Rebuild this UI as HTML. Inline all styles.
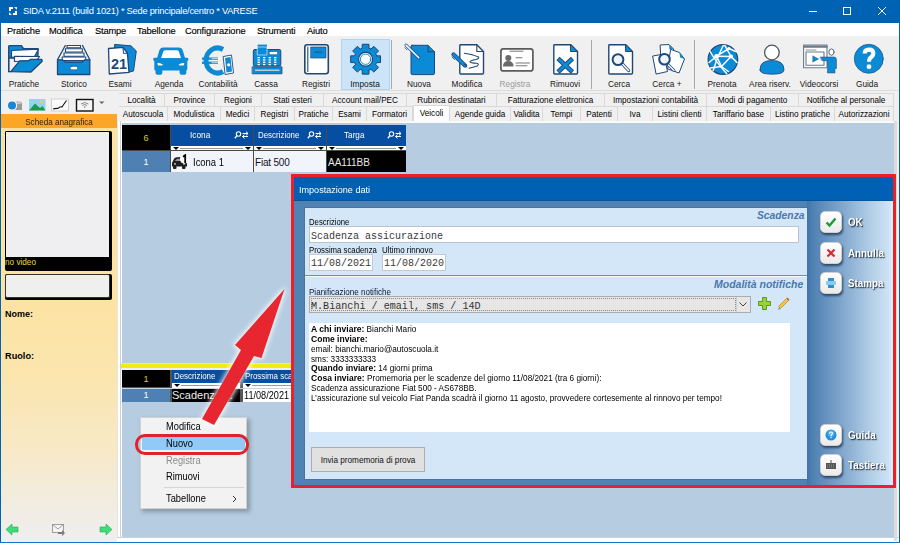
<!DOCTYPE html>
<html><head><meta charset="utf-8">
<style>
*{margin:0;padding:0;box-sizing:border-box}
html,body{width:900px;height:543px;overflow:hidden;background:#f0f0f0;font-family:"Liberation Sans",sans-serif;color:#000}
.a{position:absolute}
.t{position:absolute;white-space:nowrap;line-height:1}
/* title */
#title{left:0;top:0;width:900px;height:23px;background:#0062b2}
#menu{left:1px;top:23px;width:898px;height:13px;background:#fff}
#menu span{position:absolute;top:4px;font-size:9.3px;letter-spacing:-0.15px;color:#000;line-height:1;-webkit-text-stroke:0.15px #000}
#tb{left:1px;top:36px;width:898px;height:54px;background:#f0f0f0}
.lbl{position:absolute;top:80px;font-size:8.3px;color:#161616;line-height:1;text-align:center;width:60px;margin-left:-30px}
/* tabs */
.tab{position:absolute;height:13px;border-right:1px solid #d9d9d9;border-top:1px solid #d9d9d9;background:#f0f0f0;font-size:8.2px;line-height:13px;text-align:center;color:#000}
/* grid */
.nl{position:absolute;left:311px;font-size:9px;line-height:9px;color:#000;white-space:nowrap;transform:scaleX(0.911);transform-origin:0 0}
.nl b{font-size:9.4px}
.hdr{position:absolute;background:#0a4e9f;color:#fff;font-size:8px;line-height:1}
</style></head><body>
<!-- window borders -->
<div class="a" style="left:0;top:0;width:1px;height:543px;background:#0062b2"></div>
<div class="a" style="left:899px;top:0;width:1px;height:543px;background:#0062b2"></div>
<div class="a" style="left:0;top:542px;width:900px;height:1px;background:#1a72c0"></div>

<div id="title" class="a">
  <div class="t" style="left:23px;top:7px;font-size:9.3px;letter-spacing:-0.24px;color:#fff">SIDA v.2111 (build 1021) * Sede principale/centro * VARESE</div>
</div>

<svg class="a" style="left:8px;top:6px" width="10" height="10" viewBox="0 0 10 10"><path d="M1 1 H5 V3 H3 V5 H1 Z" fill="#fff"/><path d="M9 9 H5 V7 H7 V5 H9 Z" fill="#fff"/><path d="M6 1 H9 V4 Z" fill="#dfefff"/><path d="M1 6 V9 H4 Z" fill="#dfefff"/></svg>
<div class="a" style="left:809px;top:11px;width:8px;height:1px;background:#fff"></div>
<div class="a" style="left:843px;top:7px;width:8px;height:8px;border:1px solid #fff"></div>
<svg class="a" style="left:878px;top:7px" width="8" height="8" viewBox="0 0 8 8"><path d="M0 0 L8 8 M8 0 L0 8" stroke="#fff" stroke-width="1"/></svg>

<div id="menu" class="a">
  <span style="left:6px">Pratiche</span>
  <span style="left:48px">Modifica</span>
  <span style="left:94px">Stampe</span>
  <span style="left:136px">Tabellone</span>
  <span style="left:184px">Configurazione</span>
  <span style="left:256px">Strumenti</span>
  <span style="left:306px">Aiuto</span>
</div>
<div id="tb" class="a"></div>
<div class="a" style="left:341px;top:39px;width:49px;height:51px;background:#cce4f7;border:1px solid #a9d6fb"></div>
<div class="a" style="left:391px;top:40px;width:1px;height:49px;background:#a8a8a8"></div>
<div class="a" style="left:591px;top:40px;width:1px;height:49px;background:#a8a8a8"></div>
<div class="a" style="left:694px;top:40px;width:1px;height:49px;background:#a8a8a8"></div>

<svg class="a" style="left:0;top:0" width="900" height="90" viewBox="0 0 900 90">
<g stroke-linejoin="round" stroke-linecap="round">
<!-- Pratiche folder origin 8,45 -->
<g transform="translate(8 45)">
 <path d="M0.7 26.5 V1.2 Q0.7 0.7 1.5 0.7 H13.5 L15.5 3.7 H30 V13 H0.7" fill="#0b8ad6" stroke="#1f4777" stroke-width="1.3"/>
 <path d="M3.5 5.5 L30.5 4.2 L26.5 11.5 L3.5 12.3 Z" fill="#fff" stroke="#1f4777" stroke-width="1.2"/>
 <path d="M6.5 11.3 L31.5 11.5 L28.5 15.5 L6.5 16.5 Z" fill="#fff" stroke="#1f4777" stroke-width="1.2"/>
 <path d="M2.8 26.7 L11.7 15.8 L20.5 15.8 L22.7 14.4 L33.8 14.4 L34.2 16.3 L23 27 Z" fill="#0b8ad6" stroke="#1f4777" stroke-width="1.3"/>
 <path d="M0.7 12 V26.7 H3" fill="none" stroke="#1f4777" stroke-width="1.3"/>
</g>
<!-- Storico drawer origin 57,45 -->
<g transform="translate(57 45)">
 <path d="M0.5 14.8 L8.3 0.5 M32.8 14.8 L25.5 0.5" stroke="#1f4777" stroke-width="1.3" fill="none"/>
 <rect x="10" y="0.5" width="13.5" height="2.3" fill="#fff" stroke="#1f4777" stroke-width="1.1"/>
 <rect x="8.5" y="3.8" width="16.8" height="3.2" fill="#fff" stroke="#1f4777" stroke-width="1.1"/>
 <rect x="7" y="8" width="20" height="3.3" fill="#fff" stroke="#1f4777" stroke-width="1.1"/>
 <rect x="5.2" y="12" width="23.5" height="3.5" fill="#fff" stroke="#1f4777" stroke-width="1.1"/>
 <path d="M0.5 14.8 H5.5 L8.3 17 H25 L27.8 14.8 H32.8 V29.5 H0.5 Z" fill="#0b8ad6" stroke="#1f4777" stroke-width="1.3"/>
 <rect x="13.3" y="21.4" width="7.2" height="3.4" rx="1.2" fill="#fff" stroke="#1f4777" stroke-width=".6"/>
</g>
<!-- Esami origin 108,44 -->
<g transform="translate(108 44)">
 <path d="M7 0.5 L23 1.8 L28.3 7 L25.5 27 L19.5 28.5 L19 9 L15 3.5 L7 4 Z" fill="#0b8ad6" stroke="#1f4777" stroke-width="1"/>
 <path d="M0.5 4.5 L15 3.4 L19.4 9.2 L21 28.3 L1.3 30 Z" fill="#fff" stroke="#1f4777" stroke-width="1.3"/>
 <path d="M15 3.4 L15.5 9.4 L19.4 9.2" fill="none" stroke="#1f4777" stroke-width="1"/>
 <text x="11" y="25" font-family="Liberation Sans" font-weight="bold" font-size="14.5" fill="#1f4777" text-anchor="middle">21</text>
</g>
<!-- Agenda car origin 153.3,47.4 -->
<g transform="translate(153.3 47.4)">
 <path d="M10 0 H25.5 Q28.5 0 29.5 3 L32 11.5 H3.5 L6 3 Q7 0 10 0 Z" fill="#0b8ad6"/>
 <path d="M12 2.8 H23.5 Q25 2.8 25.5 4 L27.8 10.8 H7.7 L10 4 Q10.5 2.8 12 2.8 Z" fill="#fff"/>
 <rect x="0" y="10.3" width="5.5" height="3.2" rx="1.2" fill="#0b8ad6"/>
 <rect x="29.5" y="10.3" width="5.5" height="3.2" rx="1.2" fill="#0b8ad6"/>
 <path d="M3 10.8 H32 Q34 10.8 34 13 V21.5 Q34 23 32.5 23 H2.5 Q1 23 1 21.5 V13 Q1 10.8 3 10.8 Z" fill="#0b8ad6"/>
 <path d="M4 15.8 Q7 15.3 10 17.5 Q7 18.6 4.5 17.8 Z" fill="#fff"/>
 <path d="M31 15.8 Q28 15.3 25 17.5 Q28 18.6 30.5 17.8 Z" fill="#fff"/>
 <path d="M2.2 21.5 H9 V25.5 Q9 27.3 7.2 27.3 H4 Q2.2 27.3 2.2 25.5 Z" fill="#0b8ad6"/>
 <path d="M26.3 21.5 H33 V25.5 Q33 27.3 31.2 27.3 H28 Q26.3 27.3 26.3 25.5 Z" fill="#0b8ad6"/>
</g>
<!-- Contabilita origin 202,46 -->
<g transform="translate(202 46)">
 <path d="M21 3.5 A11.5 12.5 0 1 0 21 25.5" fill="none" stroke="#0b8ad6" stroke-width="5" stroke-linecap="butt"/>
 <rect x="0" y="11.5" width="16" height="2.3" fill="#0b8ad6"/>
 <rect x="0" y="15.6" width="16" height="2.3" fill="#0b8ad6"/>
 <path d="M10 12.6 H20 M10 16.7 H19" stroke="#fff" stroke-width=".7"/>
 <path d="M21.5 10.5 L29.5 9 L31.5 27 L23.5 28.5 Z" fill="#fff" stroke="#1f4777" stroke-width=".9"/>
 <path d="M23 12 L28.5 11 L30 25.5 L24.5 26.5 Z" fill="#0b8ad6"/>
 <circle cx="26.7" cy="18.8" r="1.6" fill="#fff"/>
</g>
<!-- Cassa origin 252,44 -->
<g transform="translate(252 44)">
 <rect x="5.6" y="0.6" width="9.4" height="8.3" fill="#0b8ad6"/>
 <rect x="1.3" y="5.5" width="27.5" height="16.5" rx="1.5" fill="#0b8ad6" stroke="#1f4777" stroke-width="1"/>
 <rect x="5.6" y="3" width="9.4" height="8" fill="#0b8ad6" stroke="#fff" stroke-width=".6"/>
 <rect x="17.2" y="7.5" width="8.4" height="3.2" rx=".8" fill="#fff" stroke="#1f4777" stroke-width=".6"/>
 <g fill="#fff">
 <rect x="5.5" y="13" width="2.4" height="1.3"/><rect x="11" y="13" width="2.4" height="1.3"/><rect x="16.5" y="13" width="2.4" height="1.3"/><rect x="22" y="13" width="2.4" height="1.3"/>
 <rect x="5.5" y="15.3" width="2.4" height="1.3"/><rect x="11" y="15.3" width="2.4" height="1.3"/><rect x="16.5" y="15.3" width="2.4" height="1.3"/><rect x="22" y="15.3" width="2.4" height="1.3"/>
 <rect x="5.5" y="17.6" width="2.4" height="1.3"/><rect x="11" y="17.6" width="2.4" height="1.3"/><rect x="16.5" y="17.6" width="2.4" height="1.3"/><rect x="22" y="17.6" width="2.4" height="1.3"/>
 <rect x="5.5" y="19.9" width="2.4" height="1.3"/><rect x="11" y="19.9" width="2.4" height="1.3"/><rect x="16.5" y="19.9" width="2.4" height="1.3"/><rect x="22" y="19.9" width="2.4" height="1.3"/>
 </g>
 <rect x="0.5" y="22.8" width="29.5" height="7" fill="#0b8ad6" stroke="#1f4777" stroke-width=".8"/>
 <rect x="3" y="25.6" width="24.5" height="1.3" fill="#cfd8e0"/>
</g>
<!-- Registri origin 304,44 -->
<g transform="translate(304 44)">
 <rect x="0.8" y="0.8" width="23.5" height="29" rx="2.5" fill="#fff" stroke="#1f4777" stroke-width="1.6"/>
 <path d="M3.8 3 V27.5" stroke="#1f4777" stroke-width="1.1"/>
 <rect x="7" y="3" width="15" height="11" fill="#0b8ad6" stroke="#1f4777" stroke-width=".7"/>
 <path d="M10.5 8.2 H18" stroke="#1f4777" stroke-width=".8"/>
</g>
<!-- Imposta gear center 365.6,59 -->
<g transform="translate(365.6 59.2)">
 <path d="M10.99 -3.40 L14.93 -3.34 L14.93 3.34 L10.99 3.40 A11.5 11.5 0 0 1 10.17 5.37 L10.17 5.37 L12.92 8.20 L8.20 12.92 L5.37 10.17 A11.5 11.5 0 0 1 3.40 10.99 L3.40 10.99 L3.34 14.93 L-3.34 14.93 L-3.40 10.99 A11.5 11.5 0 0 1 -5.37 10.17 L-5.37 10.17 L-8.20 12.92 L-12.92 8.20 L-10.17 5.37 A11.5 11.5 0 0 1 -10.99 3.40 L-10.99 3.40 L-14.93 3.34 L-14.93 -3.34 L-10.99 -3.40 A11.5 11.5 0 0 1 -10.17 -5.37 L-10.17 -5.37 L-12.92 -8.20 L-8.20 -12.92 L-5.37 -10.17 A11.5 11.5 0 0 1 -3.40 -10.99 L-3.40 -10.99 L-3.34 -14.93 L3.34 -14.93 L3.40 -10.99 A11.5 11.5 0 0 1 5.37 -10.17 L5.37 -10.17 L8.20 -12.92 L12.92 -8.20 L10.17 -5.37 A11.5 11.5 0 0 1 10.99 -3.40 Z" fill="#0b8ad6" stroke="#1f4777" stroke-width="1"/>
 <circle r="7" fill="#fff" stroke="#1f4777" stroke-width="1.2"/>
 <circle r="5.2" fill="#fff" stroke="#0b8ad6" stroke-width="1"/>
</g>
<!-- Nuova origin 410.5,45 -->
<g transform="translate(410.5 44.8)">
 <path d="M1.5 0.5 H17.5 L24 7 V28.5 Q24 29.8 22.7 29.8 H1.8 Q0.5 29.8 0.5 28.5 V1.5 Q0.5 0.5 1.5 0.5 Z" fill="#0b8ad6" stroke="#1f4777" stroke-width="1"/>
 <path d="M17.5 0.5 V7 H24" fill="none" stroke="#1f4777" stroke-width="1"/>
 <path d="M-4.5 0.3 L8.3 13" stroke="#1f4777" stroke-width="3"/>
 <path d="M-4.5 0.3 L8.3 13" stroke="#fff" stroke-width="1.6"/>
 <path d="M-5.5 3 L-3.5 5" stroke="#1f4777" stroke-width=".8"/>
</g>
<!-- Modifica origin 459,44 -->
<g transform="translate(459 44)">
 <path d="M1.5 0.8 H17.8 L24.5 7.5 V29 Q24.5 30 23.5 30 H1.5 Q0.8 30 0.8 29 V1.5 Q0.8 0.8 1.5 0.8 Z" fill="#fff" stroke="#1f4777" stroke-width="1.4"/>
 <path d="M17.8 0.8 V7.5 H24.5" fill="none" stroke="#1f4777" stroke-width="1.1"/>
 <path d="M5.3 9.2 Q14 10.5 19.5 13 Q20.5 14.5 17 15.5 Q11 16.5 11 18 Q11.5 19 17.5 19.3 Q21 20 18 22 Q14 23.5 10 24.2" fill="none" stroke="#1f4777" stroke-width="1.1"/>
 <path d="M-5.5 10.5 L6 21.5" stroke="#1f4777" stroke-width="4.2"/>
 <path d="M-5.5 10.5 L6 21.5" stroke="#0b8ad6" stroke-width="2.6"/>
 <path d="M4.3 19.8 L8.5 24 L7.5 20.5 Z" fill="#1f4777"/>
 <path d="M-7 13 L-4.5 15.5" stroke="#1f4777" stroke-width=".8"/>
</g>
<!-- Registra card origin 500,48 -->
<g transform="translate(500 48)">
 <rect x="0.9" y="0.9" width="32" height="22" rx="2.5" fill="#fff" stroke="#5a5a5a" stroke-width="1.7"/>
 <path d="M10 3.2 H23" stroke="#777" stroke-width="1"/>
 <circle cx="8.3" cy="10" r="3" fill="#6a6a6a"/>
 <path d="M3 18.5 Q3 13 8.3 13 Q13.5 13 13.5 18.5 Z" fill="#6a6a6a"/>
 <path d="M16 9.8 H22 M16 15 H29.5 M16 17.8 H27" stroke="#777" stroke-width="1.1"/>
</g>
<!-- Rimuovi origin 553,44 -->
<g transform="translate(553 44)">
 <path d="M1.5 0.8 H17.8 L24.5 7.5 V29 Q24.5 30 23.5 30 H1.5 Q0.8 30 0.8 29 V1.5 Q0.8 0.8 1.5 0.8 Z" fill="#fff" stroke="#1f4777" stroke-width="1.4"/>
 <path d="M17.8 0.8 L24.5 7.5 H17.8 Z" fill="#0b8ad6" stroke="#1f4777" stroke-width="1"/>
 <path d="M5 14.5 L19.5 28 M19.5 14.5 L5 28" stroke="#1f4777" stroke-width="4.6" stroke-linecap="butt"/>
 <path d="M5.5 15 L19 27.5 M19 15 L5.5 27.5" stroke="#0b8ad6" stroke-width="3" stroke-linecap="butt"/>
</g>
<!-- Cerca origin 608,44 -->
<g transform="translate(608 44)">
 <path d="M1.5 0.8 H17.8 L24.5 7.5 V29 Q24.5 30 23.5 30 H1.5 Q0.8 30 0.8 29 V1.5 Q0.8 0.8 1.5 0.8 Z" fill="#fff" stroke="#1f4777" stroke-width="1.4"/>
 <path d="M17.8 0.8 L24.5 7.5 H17.8 Z" fill="#0b8ad6" stroke="#1f4777" stroke-width="1"/>
 <path d="M14.5 20 L20.5 26.5" stroke="#1f4777" stroke-width="3.2"/>
 <path d="M14.5 20 L20.5 26.5" stroke="#fff" stroke-width="1.5"/>
 <circle cx="10" cy="15.6" r="5.4" fill="#eef6fc" stroke="#1f4777" stroke-width="2"/>
</g>
<!-- Cerca+ origin 652,44 -->
<g transform="translate(652 44)">
 <path d="M8.5 1 L17 0.5 L21.5 5 L22 18 L9.5 19 Z" fill="#fff" stroke="#1f4777" stroke-width="1"/>
 <path d="M17 0.5 L21.5 5 L17.5 5.5 Z" fill="#0b8ad6"/>
 <path d="M1 12 L12 10 L15.5 27.5 L4.5 30 Z" fill="#fff" stroke="#1f4777" stroke-width="1"/>
 <path d="M19 5.5 L27.5 8.5 L32.5 15 L27 29 L16 25 Z" fill="#fff" stroke="#1f4777" stroke-width="1"/>
 <path d="M27.5 8.5 L32.5 15 L28 13.5 Z" fill="#0b8ad6"/>
 <path d="M16.5 21 L22 26.5" stroke="#1f4777" stroke-width="3"/>
 <path d="M16.5 21 L22 26.5" stroke="#fff" stroke-width="1.4"/>
 <circle cx="12.5" cy="15.3" r="5.3" fill="#eef6fc" stroke="#1f4777" stroke-width="2"/>
</g>
<!-- Prenota globe center 723,59.5 -->
<circle cx="722.9" cy="59.5" r="14.8" fill="#0b8ad6" stroke="#1f4777" stroke-width="1.2"/>
<g fill="none" stroke="#fff" stroke-width="1.5" stroke-linecap="butt">
 <path d="M709.5 50.5 Q716 62 727 74"/>
 <path d="M723.5 45 Q717 57 713 71"/>
 <path d="M716.5 56.2 L731 56.5"/>
 <path d="M708.5 63 L716.5 56.2 L729 48.5 L737 52"/>
 <path d="M724.5 44.8 L731 56.5 L737.5 63"/>
 <path d="M716.5 56.2 L721.5 66.5 L731 56.5"/>
 <path d="M721.5 66.5 L710 68 M721.5 66.5 L729 72"/>
</g>
<circle cx="716.5" cy="56.2" r="2.3" fill="#fff"/>
<circle cx="731" cy="56.5" r="2.1" fill="#fff"/>
<circle cx="729" cy="48.5" r="1.6" fill="#fff"/>
<!-- Area riserv -->
<path d="M760 70 Q759.5 60.5 771.9 60.5 Q784.3 60.5 784 70 Q784 74.2 771.9 74.2 Q760 74.2 760 70 Z" fill="#0b8ad6" stroke="#1f4777" stroke-width=".8"/>
<circle cx="771.9" cy="52.5" r="7.3" fill="#fff" stroke="#4a5560" stroke-width="1.3"/>
<!-- Videocorsi -->
<g transform="translate(803 44.5)">
 <rect x="0.6" y="0.6" width="23.4" height="22.6" fill="#fff" stroke="#6a7a8a" stroke-width="1.1"/>
 <path d="M1 2.4 H24" stroke="#6a7a8a" stroke-width="1.6"/><path d="M3 5.5 H13" stroke="#6a7a8a" stroke-width=".8"/>
 <rect x="3" y="7.5" width="18" height="13.2" fill="#fff" stroke="#6a7a8a" stroke-width="1.1"/>
 <path d="M10 11.5 L15.5 14.5 L10 17.5 Z" fill="#0b8ad6" stroke="#1f4777" stroke-width=".5"/>
 <ellipse cx="28.5" cy="7.6" rx="2.6" ry="3.2" fill="#fff" stroke="#5a6a7a" stroke-width="1"/>
 <path d="M17.5 12.5 H31 Q33.5 12.5 33.5 15.5 V24 H32 V28.5 H24.5 V16.5 L19 16 Z" fill="#0b8ad6" stroke="#1f4777" stroke-width=".5"/>
</g>
<!-- Guida -->
<circle cx="868.8" cy="58.8" r="14.5" fill="#0b8ad6" stroke="#1f5a8f" stroke-width="0.8"/>
<path d="M864.6 53.6 Q864.6 49.6 869 49.6 Q873.3 49.6 873.3 53.2 Q873.3 55.8 870.8 57.4 Q869 58.6 869 61.8" fill="none" stroke="#fff" stroke-width="4.1" stroke-linecap="butt"/>
<circle cx="869" cy="66.7" r="2.4" fill="#fff"/>
</g>
</svg>

<div class="lbl" style="left:24px">Pratiche</div>
<div class="lbl" style="left:74px">Storico</div>
<div class="lbl" style="left:120px">Esami</div>
<div class="lbl" style="left:169px">Agenda</div>
<div class="lbl" style="left:218px">Contabilità</div>
<div class="lbl" style="left:266px">Cassa</div>
<div class="lbl" style="left:316px">Registri</div>
<div class="lbl" style="left:365px">Imposta</div>
<div class="lbl" style="left:419px">Nuova</div>
<div class="lbl" style="left:467px">Modifica</div>
<div class="lbl" style="left:515px;color:#9a9a9a">Registra</div>
<div class="lbl" style="left:565px">Rimuovi</div>
<div class="lbl" style="left:619px">Cerca</div>
<div class="lbl" style="left:667px">Cerca +</div>
<div class="lbl" style="left:722px">Prenota</div>
<div class="lbl" style="left:770px">Area riserv.</div>
<div class="lbl" style="left:819px">Videocorsi</div>
<div class="lbl" style="left:867px">Guida</div>
<div class="a" style="left:1px;top:90px;width:898px;height:1px;background:#dcdcdc"></div>

<!-- LEFT PANEL -->
<div class="a" style="left:1px;top:91px;width:116px;height:450px;background:#f0f0f0"></div>
<div class="a" style="left:1px;top:114px;width:116px;height:427px;background:linear-gradient(#fde1a0 0%,#fce3a4 45%,#fbe5ac 60%,#f8e9c6 78%,#f2ecdf 90%,#efefef 100%)"></div>
<div class="a" style="left:1px;top:114px;width:116px;height:14px;background:#fca628"></div>
<div class="t" style="left:0;top:117.5px;width:118px;text-align:center;font-size:9px;color:#2a1e00;transform:scaleX(0.9);transform-origin:50% 0">Scheda anagrafica</div>
<!-- photo box -->
<div class="a" style="left:5px;top:131px;width:107px;height:140px;background:#000;border-radius:2px"></div>
<div class="a" style="left:5px;top:131px;width:105px;height:138px;background:#000;border-radius:2px"></div>
<div class="a" style="left:6px;top:132px;width:103px;height:125px;background:#efeff2"></div>
<div class="t" style="left:5px;top:259px;font-size:8.2px;color:#e8d84a">no video</div>
<div class="a" style="left:5px;top:274px;width:107px;height:26px;background:#000;border-radius:2px"></div>
<div class="a" style="left:5px;top:274px;width:105px;height:24px;background:#efeff0;border:1px solid #333;border-radius:2px"></div>
<div class="t" style="left:5px;top:309.8px;font-size:9px;font-weight:bold;color:#000">Nome:</div>
<div class="t" style="left:5px;top:352.4px;font-size:9.2px;font-weight:bold;color:#000">Ruolo:</div>


<!-- left toolbar icons -->
<svg class="a" style="left:0;top:95px" width="118" height="19" viewBox="0 95 118 19">
 <rect x="13" y="102" width="9" height="8" fill="#9a9a9a"/>
 <ellipse cx="17.5" cy="102.5" rx="4.5" ry="1.5" fill="#c8c8c8"/>
 <circle cx="12" cy="105.5" r="5.2" fill="#f2f2f2"/>
 <circle cx="12" cy="105.5" r="4" fill="#1a86d6"/>
 <rect x="29" y="99" width="16.5" height="11.5" fill="#8fd6f0"/>
 <path d="M29 110.5 L35 103.5 L40 108 L42.5 106 L45.5 110.5 Z" fill="#1f9a4a"/>
 <circle cx="41.5" cy="101.8" r="1.5" fill="#f5d040"/>
 <rect x="51.5" y="99" width="17" height="12" fill="#fafafa" stroke="#c8c8c8" stroke-width=".8"/>
 <path d="M53 109 Q56 108 58 108.5 Q60 106 62 107 Q64 104 66.5 100.5" fill="none" stroke="#111" stroke-width="1.1"/>
 <rect x="76.5" y="99.5" width="16.5" height="11.5" fill="#f5f5f5" stroke="#111" stroke-width="1.4"/>
 <path d="M81 104 Q84.7 101 88.4 104 M82.3 105.5 Q84.7 103.5 87 105.5" fill="none" stroke="#777" stroke-width=".9"/>
 <circle cx="84.7" cy="107" r=".8" fill="#777"/>
 <path d="M99 101.5 H104.5 L101.75 104 Z" fill="#666"/>
</svg>
<!-- bottom arrows -->
<svg class="a" style="left:0;top:520px" width="118" height="20" viewBox="0 520 118 20">
 <path d="M6 529.5 L12 524 V527 H18 V532 H12 V535 Z" fill="#3fdc7a" stroke="#2aa85a" stroke-width=".6"/>
 <path d="M112 529.5 L106 524 V527 H100 V532 H106 V535 Z" fill="#3fdc7a" stroke="#2aa85a" stroke-width=".6"/>
 <rect x="52.5" y="524.5" width="11" height="8" fill="#f4f4f4" stroke="#8a8a8a" stroke-width=".8"/>
 <path d="M52.5 524.5 L58 529 L63.5 524.5" fill="none" stroke="#8a8a8a" stroke-width=".8"/>
 <path d="M58 532 H62 V530 L65 533 L62 536 V534 H58 Z" fill="#7a7a7a"/>
</svg>

<!-- separator between panel and grid -->
<div class="a" style="left:117px;top:121px;width:4px;height:421px;background:#fff;border-left:1px solid #e6e6e6;border-right:1px solid #cfcfcf"></div>

<!-- TABS -->
<div class="a" style="left:119px;top:91px;width:780px;height:30px;background:#f0f0f0"></div>
<div class="tab" style="left:119px;top:93px;width:46px">Località</div>
<div class="tab" style="left:165px;top:93px;width:50px">Province</div>
<div class="tab" style="left:215px;top:93px;width:47px">Regioni</div>
<div class="tab" style="left:262px;top:93px;width:62px">Stati esteri</div>
<div class="tab" style="left:324px;top:93px;width:83px">Account mail/PEC</div>
<div class="tab" style="left:407px;top:93px;width:90px">Rubrica destinatari</div>
<div class="tab" style="left:497px;top:93px;width:108px">Fatturazione elettronica</div>
<div class="tab" style="left:605px;top:93px;width:102px">Impostazioni contabilità</div>
<div class="tab" style="left:707px;top:93px;width:92px">Modi di pagamento</div>
<div class="tab" style="left:799px;top:93px;width:95px">Notifiche al personale</div>
<div class="tab" style="left:119px;top:106px;padding-top:1px;width:49px;height:15px;line-height:14px">Autoscuola</div>
<div class="tab" style="left:168px;top:106px;padding-top:1px;width:53px;height:15px;line-height:14px">Modulistica</div>
<div class="tab" style="left:221px;top:106px;padding-top:1px;width:34px;height:15px;line-height:14px">Medici</div>
<div class="tab" style="left:255px;top:106px;padding-top:1px;width:40px;height:15px;line-height:14px">Registri</div>
<div class="tab" style="left:295px;top:106px;padding-top:1px;width:38px;height:15px;line-height:14px">Pratiche</div>
<div class="tab" style="left:333px;top:106px;padding-top:1px;width:34px;height:15px;line-height:14px">Esami</div>
<div class="tab" style="left:367px;top:106px;padding-top:1px;width:46px;height:15px;line-height:14px">Formatori</div>
<div class="tab" style="left:413px;top:105px;width:37px;height:17px;background:#fff;border:1px solid #d9d9d9;border-bottom:none;line-height:13px;padding-top:1px">Veicoli</div>
<div class="tab" style="left:450px;top:106px;padding-top:1px;width:61px;height:15px;line-height:14px">Agende guida</div>
<div class="tab" style="left:511px;top:106px;padding-top:1px;width:32px;height:15px;line-height:14px">Validita</div>
<div class="tab" style="left:543px;top:106px;padding-top:1px;width:38px;height:15px;line-height:14px">Tempi</div>
<div class="tab" style="left:581px;top:106px;padding-top:1px;width:37px;height:15px;line-height:14px">Patenti</div>
<div class="tab" style="left:618px;top:106px;padding-top:1px;width:35px;height:15px;line-height:14px">Iva</div>
<div class="tab" style="left:653px;top:106px;padding-top:1px;width:54px;height:15px;line-height:14px">Listini clienti</div>
<div class="tab" style="left:707px;top:106px;padding-top:1px;width:64px;height:15px;line-height:14px">Tariffario base</div>
<div class="tab" style="left:771px;top:106px;padding-top:1px;width:64px;height:15px;line-height:14px">Listino pratiche</div>
<div class="tab" style="left:835px;top:106px;padding-top:1px;width:59px;height:15px;line-height:14px">Autorizzazioni</div>

<!-- GRID AREA -->
<div class="a" style="left:121px;top:121px;width:774px;height:416px;background:#b5cce1;border-left:1px solid #fff;border-top:2px solid #fafafa"></div>
<div class="a" style="left:117px;top:537px;width:782px;height:5px;background:#fff;border-top:1px solid #d0d0d0"></div>
<div class="a" style="left:894px;top:121px;width:3px;height:420px;background:#dcdcdc"></div>


<!-- TOP GRID -->
<div class="a" style="left:122px;top:125px;width:284px;height:47px;background:#4a4a4a"></div>
<div class="a" style="left:122px;top:125px;width:48px;height:25px;background:#000"></div>
<div class="t" style="left:122px;top:134px;width:48px;text-align:center;font-size:9px;color:#dccb35">6</div>
<div class="a" style="left:171px;top:125px;width:82px;height:25px;background:#fff"></div>
<div class="a" style="left:171px;top:125px;width:82px;height:21px;background:#064ea1"></div>
<div class="t" style="left:190px;top:131px;font-size:9.2px;color:#fff;transform:scaleX(0.9);transform-origin:0 0">Icona</div>
<div class="a" style="left:254px;top:125px;width:72px;height:25px;background:#fff"></div>
<div class="a" style="left:254px;top:125px;width:72px;height:21px;background:#064ea1"></div>
<div class="t" style="left:257.5px;top:131px;font-size:9px;color:#fff;transform:scaleX(0.88);transform-origin:0 0">Descrizione</div>
<div class="a" style="left:327px;top:125px;width:79px;height:25px;background:#fff"></div>
<div class="a" style="left:327px;top:125px;width:79px;height:21px;background:#064ea1"></div>
<div class="t" style="left:344px;top:131px;font-size:9.2px;color:#fff;transform:scaleX(0.89);transform-origin:0 0">Targa</div>
<div class="a" style="left:173px;top:147px;width:0;height:0;border-left:3px solid transparent;border-right:3px solid transparent;border-top:3px solid #000"></div>
<div class="a" style="left:245px;top:147px;width:0;height:0;border-left:3px solid transparent;border-right:3px solid transparent;border-top:3px solid #000"></div>
<div class="a" style="left:180px;top:148px;width:63px;height:1px;background:#999"></div>
<svg class="a" style="left:234px;top:131px" width="15" height="8" viewBox="0 0 15 8"><circle cx="4.5" cy="3" r="2.2" fill="none" stroke="#fff" stroke-width="1.1"/><path d="M3 4.6 L0.8 7.2" stroke="#fff" stroke-width="1.4"/><path d="M8.5 2.5 H14 M12 0.6 L14 2.5 L12 4.4 M14 5.5 H8.5 M10.5 3.6 L8.5 5.5 L10.5 7.4" fill="none" stroke="#fff" stroke-width="1"/></svg>
<div class="a" style="left:256px;top:147px;width:0;height:0;border-left:3px solid transparent;border-right:3px solid transparent;border-top:3px solid #000"></div>
<div class="a" style="left:318px;top:147px;width:0;height:0;border-left:3px solid transparent;border-right:3px solid transparent;border-top:3px solid #000"></div>
<div class="a" style="left:263px;top:148px;width:53px;height:1px;background:#999"></div>
<svg class="a" style="left:307px;top:131px" width="15" height="8" viewBox="0 0 15 8"><circle cx="4.5" cy="3" r="2.2" fill="none" stroke="#fff" stroke-width="1.1"/><path d="M3 4.6 L0.8 7.2" stroke="#fff" stroke-width="1.4"/><path d="M8.5 2.5 H14 M12 0.6 L14 2.5 L12 4.4 M14 5.5 H8.5 M10.5 3.6 L8.5 5.5 L10.5 7.4" fill="none" stroke="#fff" stroke-width="1"/></svg>
<div class="a" style="left:329px;top:147px;width:0;height:0;border-left:3px solid transparent;border-right:3px solid transparent;border-top:3px solid #000"></div>
<div class="a" style="left:398px;top:147px;width:0;height:0;border-left:3px solid transparent;border-right:3px solid transparent;border-top:3px solid #000"></div>
<div class="a" style="left:336px;top:148px;width:60px;height:1px;background:#999"></div>
<svg class="a" style="left:387px;top:131px" width="15" height="8" viewBox="0 0 15 8"><circle cx="4.5" cy="3" r="2.2" fill="none" stroke="#fff" stroke-width="1.1"/><path d="M3 4.6 L0.8 7.2" stroke="#fff" stroke-width="1.4"/><path d="M8.5 2.5 H14 M12 0.6 L14 2.5 L12 4.4 M14 5.5 H8.5 M10.5 3.6 L8.5 5.5 L10.5 7.4" fill="none" stroke="#fff" stroke-width="1"/></svg>
<div class="a" style="left:122px;top:151px;width:48px;height:21px;background:#4f80b3"></div>
<div class="t" style="left:122px;top:158px;width:48px;text-align:center;font-size:9px;color:#fff">1</div>
<div class="a" style="left:171px;top:151px;width:82px;height:21px;background:#f1f5fb"></div>
<div class="t" style="left:193px;top:157px;font-size:10.5px;color:#000;transform:scaleX(0.9);transform-origin:0 0">Icona 1</div>
<div class="a" style="left:254px;top:151px;width:72px;height:21px;background:#f1f5fb"></div>
<div class="t" style="left:255px;top:158px;font-size:10px;color:#111;letter-spacing:-0.2px">Fiat 500</div>
<div class="a" style="left:327px;top:151px;width:79px;height:21px;background:#000"></div>
<div class="t" style="left:328px;top:158px;font-size:10px;color:#e8e8e8">AA111BB</div>
<svg class="a" style="left:171px;top:154px" width="19" height="16" viewBox="0 0 19 16"><path d="M2 7 Q3 3.5 6 3.2 L11 3 L13 7 L15 8 Q16 8.5 16 10 V12.5 H1 V9.5 Q1 8 2 7 Z" fill="#1e1e1e"/><path d="M4 7 Q5 5 6.5 4.8 L10 4.7 L11 7 Z" fill="#9a9a9a"/><rect x="2" y="12" width="3.5" height="3" rx="1" fill="#1e1e1e"/><rect x="11" y="12" width="3.5" height="3" rx="1" fill="#1e1e1e"/><rect x="3" y="9.3" width="2" height="1.2" fill="#ddd"/><rect x="12" y="9.3" width="2" height="1.2" fill="#ddd"/><circle cx="13.5" cy="5" r="4.6" fill="#fff"/><path d="M12 2.8 L14.2 1.2 V9" fill="none" stroke="#000" stroke-width="1.8"/></svg>



<!-- LOWER GRID -->
<div class="a" style="left:121px;top:363px;width:773px;height:1px;background:#dbe4ec"></div>
<div class="a" style="left:121px;top:364px;width:773px;height:4px;background:#f2ea12"></div>
<div class="a" style="left:121px;top:368px;width:773px;height:2px;background:#eef0f8"></div>
<div class="a" style="left:122px;top:370px;width:170px;height:32px;background:#555"></div>
<div class="a" style="left:122px;top:370px;width:48px;height:17px;background:#000"></div>
<div class="t" style="left:122px;top:375px;width:48px;text-align:center;font-size:9px;color:#dccb35">1</div>
<div class="a" style="left:172px;top:370px;width:68px;height:18px;background:#fff"></div>
<div class="a" style="left:172px;top:370px;width:68px;height:13px;background:#064ea1"></div>
<div class="t" style="left:174px;top:372px;font-size:8.8px;color:#fff;transform:scaleX(0.9);transform-origin:0 0">Descrizione</div>
<div class="a" style="left:243px;top:370px;width:50px;height:18px;background:#fff"></div>
<div class="a" style="left:243px;top:370px;width:50px;height:13px;background:#064ea1"></div>
<div class="t" style="left:245px;top:372px;font-size:8.8px;color:#fff;transform:scaleX(0.9);transform-origin:0 0">Prossima scadenza</div>
<div class="a" style="left:174px;top:384px;width:0;height:0;border-left:3px solid transparent;border-right:3px solid transparent;border-top:3px solid #000"></div>
<div class="a" style="left:245px;top:384px;width:0;height:0;border-left:3px solid transparent;border-right:3px solid transparent;border-top:3px solid #000"></div>
<div class="a" style="left:181px;top:385px;width:55px;height:1px;background:#999"></div>
<div class="a" style="left:252px;top:385px;width:40px;height:1px;background:#999"></div>
<div class="a" style="left:122px;top:388px;width:170px;height:1px;background:#c5d5e5"></div>
<div class="a" style="left:122px;top:389px;width:48px;height:13px;background:#4f80b3"></div>
<div class="t" style="left:122px;top:391px;width:48px;text-align:center;font-size:9px;color:#fff">1</div>
<div class="a" style="left:172px;top:389px;width:68px;height:13px;background:#000"></div>
<div class="t" style="left:172px;top:390px;font-size:11px;color:#eee">Scadenza ...</div>
<div class="a" style="left:243px;top:389px;width:50px;height:13px;background:#fff"></div>
<div class="t" style="left:244px;top:390px;font-size:10.5px;color:#000;transform:scaleX(0.87);transform-origin:0 0">11/08/2021</div>


<!-- CONTEXT MENU -->
<div class="a" style="left:142px;top:419px;width:108px;height:93px;background:rgba(0,0,0,.25);filter:blur(2px)"></div>
<div class="a" style="left:140px;top:417px;width:107px;height:92px;background:#f2f2f2;border:1px solid #d2d2d2"></div>
<div class="a" style="left:142px;top:436px;width:103px;height:14px;background:#91c9f7"></div>
<div class="a" style="left:164px;top:487px;width:80px;height:1px;background:#d7d7d7"></div>
<div class="t" style="left:166px;top:422px;font-size:10px;color:#000;transform:scaleX(0.93);transform-origin:0 0">Modifica</div>
<div class="t" style="left:166px;top:439px;font-size:10px;color:#000;transform:scaleX(0.93);transform-origin:0 0">Nuovo</div>
<div class="t" style="left:166px;top:456px;font-size:10px;color:#8a8a8a;transform:scaleX(0.93);transform-origin:0 0">Registra</div>
<div class="t" style="left:166px;top:472px;font-size:10px;color:#000;transform:scaleX(0.93);transform-origin:0 0">Rimuovi</div>
<div class="t" style="left:166px;top:494px;font-size:10px;color:#000;transform:scaleX(0.93);transform-origin:0 0">Tabellone</div>
<svg class="a" style="left:232px;top:495px" width="5" height="8" viewBox="0 0 5 8"><path d="M1 1 L4 4 L1 7" fill="none" stroke="#333" stroke-width="1"/></svg>
<div class="a" style="left:135px;top:433.5px;width:114px;height:21.5px;border:3px solid #e0222c;border-radius:10px"></div>
<!-- ARROW -->
<svg class="a" style="left:0;top:0" width="900" height="543" viewBox="0 0 900 543">
<defs><filter id="glow" x="-20%" y="-20%" width="140%" height="140%"><feGaussianBlur stdDeviation="2.5"/></filter></defs>
<path d="M202 419 L214 425 L254 356 L261.5 358 L284.5 289 L235 345 L241 350 Z" fill="#fff" opacity=".9" filter="url(#glow)" stroke="#fff" stroke-width="3"/>
<path d="M202 419 L214 425 L254 356 L261.5 358 L284.5 289 L235 345 L241 350 Z" fill="#e8262f"/>
</svg>

<!-- DIALOG -->
<div class="a" style="left:291px;top:174px;width:605px;height:314px;border:3px solid #e8212b"></div>
<div class="a" style="left:294px;top:177px;width:599px;height:24px;background:#0060b4;border-bottom:1px solid #0054a0"></div>
<div class="t" style="left:298.5px;top:184.5px;font-size:9.7px;color:#fff;transform:scaleX(0.935);transform-origin:0 0">Impostazione dati</div>
<div class="a" style="left:294px;top:201px;width:599px;height:284px;background:#5082b4"></div>
<div class="a" style="left:304px;top:207px;width:504px;height:273px;background:#4a74a0"></div>
<div class="a" style="left:305px;top:208px;width:502px;height:271px;background:#d4e7f9"></div>
<div class="a" style="left:807px;top:201px;width:86px;height:284px;background:linear-gradient(90deg,#3f74aa 0%,#4f80b3 6%,#7fa6cc 40%,#b4cfe8 75%,#cde2f5 95%,#e2f0fc 100%)"></div>
<div class="a" style="left:305px;top:275px;width:502px;height:1px;background:#6f8fb0"></div>
<div class="a" style="left:305px;top:276px;width:502px;height:1px;background:#f4f9fe"></div>
<div class="t" style="left:757px;top:211px;font-size:10.3px;font-weight:bold;font-style:italic;color:#4a78ac">Scadenza</div>
<div class="t" style="left:714px;top:279px;font-size:10.5px;font-weight:bold;font-style:italic;color:#4a78ac">Modalità notifiche</div>
<div class="t" style="left:308.5px;top:218px;font-size:8.6px;color:#000;transform:scaleX(0.9);transform-origin:0 0">Descrizione</div>
<div class="a" style="left:309px;top:226px;width:490px;height:17px;background:#fff;border:1px solid #b9c3cc"></div>
<div class="t" style="left:311px;top:232px;font-size:10px;font-family:'Liberation Mono',monospace;color:#3a3a3a">Scadenza assicurazione</div>
<div class="t" style="left:309px;top:245.6px;font-size:8.6px;color:#000;transform:scaleX(0.905);transform-origin:0 0">Prossima scadenza</div>
<div class="t" style="left:382px;top:245.6px;font-size:8.6px;color:#000;transform:scaleX(0.927);transform-origin:0 0">Ultimo rinnovo</div>
<div class="a" style="left:309px;top:254px;width:64px;height:17px;background:#fff;border:1px solid #c3c9cf"></div>
<div class="t" style="left:311px;top:259px;font-size:10px;font-family:'Liberation Mono',monospace;color:#3a3a3a">11/08/2021</div>
<div class="a" style="left:382px;top:254px;width:64px;height:17px;background:#fff;border:1px solid #c3c9cf"></div>
<div class="t" style="left:384px;top:259px;font-size:10px;font-family:'Liberation Mono',monospace;color:#3a3a3a">11/08/2020</div>
<div class="t" style="left:309px;top:287.7px;font-size:8.6px;color:#0a1430;transform:scaleX(0.937);transform-origin:0 0">Pianificazione notifiche</div>
<div class="a" style="left:309px;top:296px;width:442px;height:17px;background:#e6e6e6;border:1px solid #acacac"></div>
<div class="a" style="left:311px;top:298px;width:425px;height:13px;border:1px dotted #8a8a8a"></div>
<div class="a" style="left:736px;top:297px;width:14px;height:15px;background:#e6e6e6;border-left:1px solid #cfcfcf"></div>
<svg class="a" style="left:739px;top:302px" width="8" height="5" viewBox="0 0 8 5"><path d="M0.5 0.5 L4 4 L7.5 0.5" fill="none" stroke="#444" stroke-width="1"/></svg>
<div class="t" style="left:311px;top:302px;font-size:10.1px;font-family:'Liberation Mono',monospace;color:#333">M.Bianchi / email, sms / 14D</div>
<svg class="a" style="left:758px;top:297px" width="13" height="13" viewBox="0 0 13 13"><path d="M4.5 0.5 H8.5 V4.5 H12.5 V8.5 H8.5 V12.5 H4.5 V8.5 H0.5 V4.5 H4.5 Z" fill="#9ad13a" stroke="#5a9a1a" stroke-width="1"/></svg>
<svg class="a" style="left:777px;top:297px" width="13" height="13" viewBox="0 0 13 13"><path d="M2 11 L1 12.5 L3 12 Z" fill="#333"/><path d="M1.5 9.5 L9.5 1.5 L11.5 3.5 L3.5 11.5 Z" fill="#f5c842" stroke="#b08020" stroke-width="0.7"/><path d="M9.5 1.5 L10.5 0.5 L12.5 2.5 L11.5 3.5 Z" fill="#e05050"/></svg>
<!-- notes -->
<div class="a" style="left:309px;top:323px;width:481px;height:109px;background:#fff"></div>
<div class="nl" style="top:323.9px"><b>A chi inviare:</b> Bianchi Mario</div>
<div class="nl" style="top:333.9px"><b>Come inviare:</b></div>
<div class="nl" style="top:345.0px">email: bianchi.mario@autoscuola.it</div>
<div class="nl" style="top:355.0px">sms: 3333333333</div>
<div class="nl" style="top:363.1px"><b>Quando inviare:</b> 14 giorni prima</div>
<div class="nl" style="top:372.8px"><b>Cosa inviare:</b> Promemoria per le scadenze del giorno 11/08/2021 (tra 6 giorni):</div>
<div class="nl" style="top:384.2px">Scadenza assicurazione Fiat 500 - AS678BB.</div>
<div class="nl" style="top:394.0px">L’assicurazione sul veicolo Fiat Panda scadrà il giorno 11 agosto, provvedere cortesemente al rinnovo per tempo!</div>
<div class="a" style="left:311px;top:447px;width:114px;height:25px;background:#e1e1e1;border:1px solid #adadad"></div>
<div class="t" style="left:311px;top:457px;width:114px;text-align:center;font-size:8.2px;color:#111">Invia promemoria di prova</div>
<div class="a" style="left:821px;top:213px;width:22px;height:22px;border-radius:5px;background:#1d3550;opacity:.8;filter:blur(1px)"></div>
<div class="a" style="left:820px;top:211px;width:22px;height:22px;border-radius:5px;background:linear-gradient(#ffffff,#ecebea);border:1px solid #d0d0d0"></div>
<div class="t" style="left:848px;top:216.5px;font-size:11px;font-weight:bold;color:#fff;text-shadow:1px 1px 1.5px #0a1420;transform:scaleX(0.89);transform-origin:0 0">OK</div>
<svg class="a" style="left:825px;top:216px" width="12" height="12" viewBox="0 0 12 12"><path d="M1.5 6.5 L4.5 9.5 L10.5 2.5" fill="none" stroke="#1a9a3a" stroke-width="2.4"/></svg>
<div class="a" style="left:821px;top:244px;width:22px;height:22px;border-radius:5px;background:#1d3550;opacity:.8;filter:blur(1px)"></div>
<div class="a" style="left:820px;top:242px;width:22px;height:22px;border-radius:5px;background:linear-gradient(#ffffff,#ecebea);border:1px solid #d0d0d0"></div>
<div class="t" style="left:848px;top:247.5px;font-size:11px;font-weight:bold;color:#fff;text-shadow:1px 1px 1.5px #0a1420;transform:scaleX(0.89);transform-origin:0 0">Annulla</div>
<svg class="a" style="left:826px;top:248px" width="10" height="10" viewBox="0 0 10 10"><path d="M1.5 1.5 L8.5 8.5 M8.5 1.5 L1.5 8.5" fill="none" stroke="#d8283a" stroke-width="2.2"/></svg>
<div class="a" style="left:821px;top:274px;width:22px;height:22px;border-radius:5px;background:#1d3550;opacity:.8;filter:blur(1px)"></div>
<div class="a" style="left:820px;top:272px;width:22px;height:22px;border-radius:5px;background:linear-gradient(#ffffff,#ecebea);border:1px solid #d0d0d0"></div>
<div class="t" style="left:848px;top:277.5px;font-size:11px;font-weight:bold;color:#fff;text-shadow:1px 1px 1.5px #0a1420;transform:scaleX(0.89);transform-origin:0 0">Stampa</div>
<svg class="a" style="left:825px;top:277px" width="12" height="12" viewBox="0 0 12 12"><rect x="3" y="1" width="6" height="3" fill="#2a90d0"/><rect x="1" y="4" width="10" height="4" rx="1" fill="#8cc8ec"/><rect x="3" y="8" width="6" height="3" fill="#2a90d0"/></svg>
<div class="a" style="left:821px;top:426px;width:22px;height:22px;border-radius:5px;background:#1d3550;opacity:.8;filter:blur(1px)"></div>
<div class="a" style="left:820px;top:424px;width:22px;height:22px;border-radius:5px;background:linear-gradient(#ffffff,#ecebea);border:1px solid #d0d0d0"></div>
<div class="t" style="left:848px;top:429.5px;font-size:11px;font-weight:bold;color:#fff;text-shadow:1px 1px 1.5px #0a1420;transform:scaleX(0.89);transform-origin:0 0">Guida</div>
<svg class="a" style="left:825px;top:429px" width="12" height="12" viewBox="0 0 12 12"><circle cx="6" cy="6" r="5.5" fill="#1e90e0"/><circle cx="6" cy="4.5" r="3.5" fill="#6cc0f5" opacity=".6"/><path d="M4.5 4.5 Q4.5 3 6 3 Q7.5 3 7.5 4.3 Q7.5 5 6.3 5.8 L6 7" fill="none" stroke="#fff" stroke-width="1.2"/><rect x="5.4" y="8" width="1.2" height="1.2" fill="#fff"/></svg>
<div class="a" style="left:821px;top:456px;width:22px;height:22px;border-radius:5px;background:#1d3550;opacity:.8;filter:blur(1px)"></div>
<div class="a" style="left:820px;top:454px;width:22px;height:22px;border-radius:5px;background:linear-gradient(#ffffff,#ecebea);border:1px solid #d0d0d0"></div>
<div class="t" style="left:848px;top:459.5px;font-size:11px;font-weight:bold;color:#fff;text-shadow:1px 1px 1.5px #0a1420;transform:scaleX(0.89);transform-origin:0 0">Tastiera</div>
<svg class="a" style="left:825px;top:459px" width="12" height="12" viewBox="0 0 12 12"><path d="M6 1 V4" stroke="#555" stroke-width="1"/><rect x="1" y="4" width="10" height="6" fill="#555"/><path d="M2 6 H10 M2 8 H10" stroke="#bbb" stroke-width="0.6" stroke-dasharray="1 1"/></svg>

</body></html>
